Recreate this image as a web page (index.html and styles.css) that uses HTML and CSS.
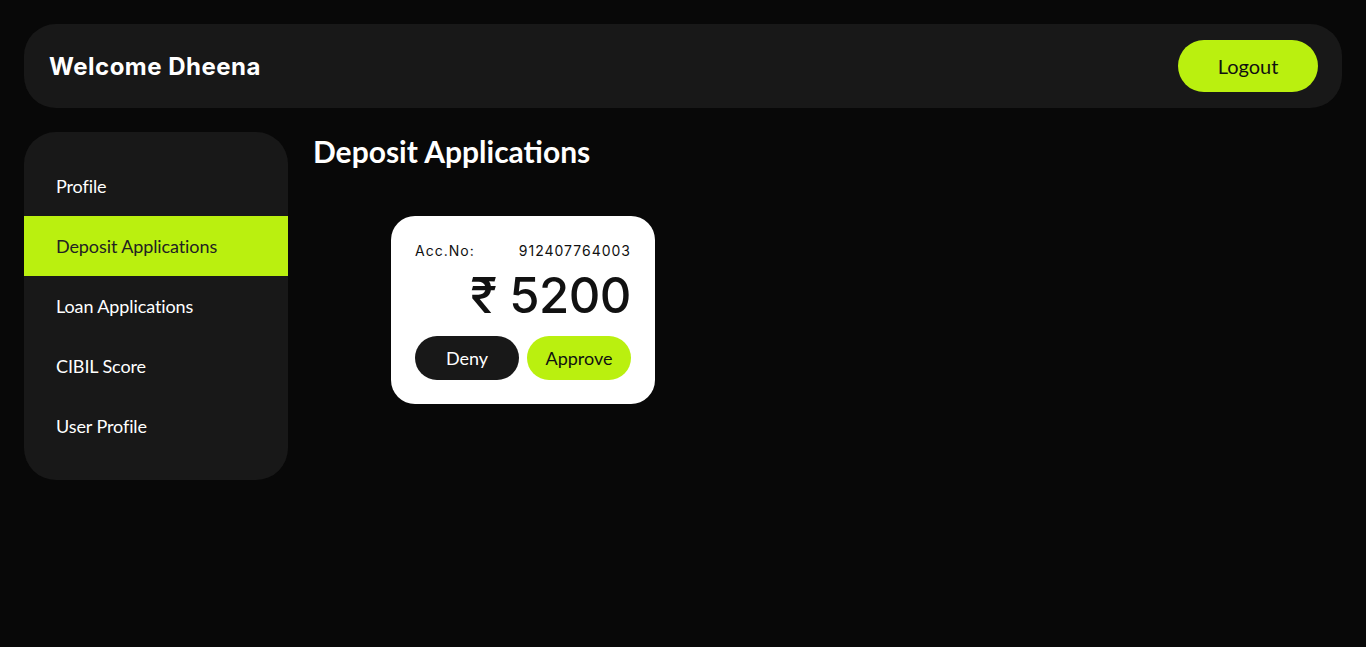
FILE: index.html
```html
<!DOCTYPE html>
<html>
<head>
<meta charset="utf-8">
<link rel="stylesheet" href="styles.css">
</head>
<body>
<div class="page">
  <header class="topbar">
    <h1 class="welcome">Welcome Dheena</h1>
    <button class="logout">Logout</button>
  </header>
  <div class="body">
    <nav class="sidebar">
      <div class="nav-item">Profile</div>
      <div class="nav-item active">Deposit Applications</div>
      <div class="nav-item">Loan Applications</div>
      <div class="nav-item">CIBIL Score</div>
      <div class="nav-item">User Profile</div>
    </nav>
    <main class="main">
      <h2 class="title">Deposit Applications</h2>
      <div class="cards">
        <div class="card">
          <div class="acc-row"><span>Acc.No:</span><span>912407764003</span></div>
          <div class="amount">₹ 5200</div>
          <div class="actions">
            <button class="btn deny">Deny</button>
            <button class="btn approve">Approve</button>
          </div>
        </div>
      </div>
    </main>
  </div>
</div>
</body>
</html>
```

FILE: styles.css
```css
* { box-sizing: border-box; }
html, body { margin: 0; padding: 0; }
body {
  background: #080808;
  color: #fff;
  font-family: "Noto Sans", sans-serif;
  height: 647px;
}
.page {
  padding: 24px;
  display: flex;
  flex-direction: column;
  gap: 24px;
}
.topbar {
  height: 84px;
  background: #181818;
  border-radius: 32px;
  display: flex;
  align-items: center;
  justify-content: space-between;
  padding: 0 24px 0 25px;
}
.welcome {
  margin: 0;
  font-family: "Inter", sans-serif;
  font-weight: 700;
  font-size: 24px;
  letter-spacing: 0.5px;
  color: #fff;
}
.logout {
  width: 140px;
  height: 52px;
  border: none;
  border-radius: 26px;
  background: #baf00f;
  color: #111;
  font-family: "Lato", sans-serif;
  font-size: 20px;
  cursor: pointer;
}
.body {
  display: flex;
  gap: 25px;
  align-items: flex-start;
}
.sidebar {
  width: 264px;
  background: #181818;
  border-radius: 32px;
  padding: 24px 0;
  display: flex;
  flex-direction: column;
}
.nav-item {
  height: 60px;
  display: flex;
  align-items: center;
  padding-left: 32px;
  font-family: "Lato", sans-serif;
  font-size: 18px;
  letter-spacing: -0.1px;
  color: #fff;
}
.nav-item.active {
  background: #baf00f;
  color: #222;
}
.main {
  flex: 1;
  display: flex;
  flex-direction: column;
}
.title {
  margin: 0;
  font-family: "Lato", sans-serif;
  font-weight: 700;
  font-size: 30px;
  line-height: 38px;
  color: #fff;
}
.cards {
  display: flex;
  padding: 46px 0 0 78px;
}
.card {
  width: 264px;
  height: 188px;
  background: #fff;
  border-radius: 24px;
  padding: 24px;
  color: #111;
  display: flex;
  flex-direction: column;
}
.acc-row {
  display: flex;
  justify-content: space-between;
  font-family: "Inter", sans-serif;
  font-size: 14px;
  letter-spacing: 1px;
  line-height: 22px;
  color: #111;
}
.amount {
  text-align: right;
  font-family: "Inter", sans-serif;
  font-weight: 550;
  font-size: 49px;
  line-height: 56px;
  margin-top: 6px;
  letter-spacing: -0.5px;
}
.actions {
  display: flex;
  gap: 8px;
  margin-top: 12px;
}
.btn {
  width: 104px;
  height: 44px;
  border: none;
  border-radius: 22px;
  font-family: "Lato", sans-serif;
  font-size: 18px;
  cursor: pointer;
}
.deny { background: #181818; color: #fff; }
.approve { background: #baf00f; color: #111; }
```
